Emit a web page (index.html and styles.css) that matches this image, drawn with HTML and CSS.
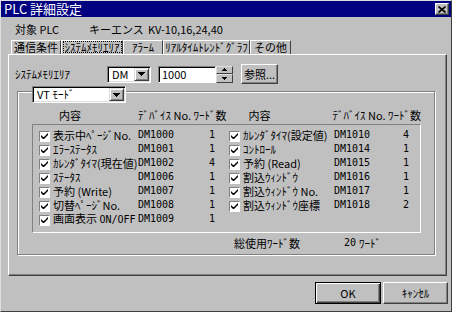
FILE: index.html
```html
<!DOCTYPE html>
<html lang="ja">
<head>
    <meta charset="UTF-8">
    <title>PLC 詳細設定</title>
    <link rel="stylesheet" href="styles.css">
</head>
<body>
<div class="window">
    <div class="titlebar">
        <span class="title">PLC 詳細設定</span>
        <span class="close"><svg width="8" height="7" viewBox="0 0 8 7"><path d="M0.5 0.5L7.5 6.5M7.5 0.5L0.5 6.5" stroke="#000" stroke-width="1.6"/></svg></span>
    </div>

    <div class="target">
        <span class="t-label">対象 PLC</span>
        <span class="t-maker">キーエンス</span>
        <span>KV-10,16,24,40</span>
    </div>

    <div class="tabs">
        <div class="tab tab-comm">通信条件</div>
        <div class="tab tab-sys"><span class="focus">ｼｽﾃﾑﾒﾓﾘｴﾘｱ</span></div>
        <div class="tab tab-alarm">ｱﾗｰﾑ</div>
        <div class="tab tab-trend">ﾘｱﾙﾀｲﾑﾄﾚﾝﾄﾞｸﾞﾗﾌ</div>
        <div class="tab tab-other">その他</div>
    </div>

    <div class="panel">
        <div class="area-row">
            <span class="area-label">ｼｽﾃﾑﾒﾓﾘｴﾘｱ</span>
            <div class="combo combo-dm">
                <span class="combo-text">DM</span>
                <span class="drop"><svg width="7" height="4" viewBox="0 0 7 4"><path d="M0 0h7v1h-1v1h-1v1h-1v1h-1v-1h-1v-1h-1v-1h-1z"/></svg></span>
            </div>
            <div class="edit"><span class="edit-text">1000</span></div>
            <div class="spin">
                <span class="spin-btn"><svg width="5" height="3" viewBox="0 0 5 3"><path d="M2 0h1v1h1v1h1v1h-5v-1h1v-1h1z"/></svg></span>
                <span class="spin-btn"><svg width="5" height="3" viewBox="0 0 5 3"><path d="M0 0h5v1h-1v1h-1v1h-1v-1h-1v-1h-1z"/></svg></span>
            </div>
            <div class="btn btn-ref">参照...</div>
        </div>

        <div class="group">
            <div class="combo combo-mode">
                <span class="combo-text">VT ﾓｰﾄﾞ</span>
                <span class="drop"><svg width="7" height="4" viewBox="0 0 7 4"><path d="M0 0h7v1h-1v1h-1v1h-1v1h-1v-1h-1v-1h-1v-1h-1z"/></svg></span>
            </div>

            <div class="list-head">
                <div class="head-half head-left"><span class="h-name">内容</span><span>ﾃﾞﾊﾞｲｽ No. ﾜｰﾄﾞ数</span></div>
                <div class="head-half head-right"><span class="h-name">内容</span><span>ﾃﾞﾊﾞｲｽ No. ﾜｰﾄﾞ数</span></div>
            </div>

            <div class="list">
                <div class="col col-left">
                    <div class="row"><span class="cb"><svg width="9" height="9" viewBox="0 0 9 9"><path d="M1 3v2l2 2h1l4-4v-2l-4 4h-1z"/></svg></span><span class="name">表示中ﾍﾟｰｼﾞNo.</span><span class="dev">DM1000</span><span class="cnt">1</span></div>
                    <div class="row"><span class="cb"><svg width="9" height="9" viewBox="0 0 9 9"><path d="M1 3v2l2 2h1l4-4v-2l-4 4h-1z"/></svg></span><span class="name">ｴﾗｰｽﾃｰﾀｽ</span><span class="dev">DM1001</span><span class="cnt">1</span></div>
                    <div class="row"><span class="cb"><svg width="9" height="9" viewBox="0 0 9 9"><path d="M1 3v2l2 2h1l4-4v-2l-4 4h-1z"/></svg></span><span class="name">ｶﾚﾝﾀﾞﾀｲﾏ(現在値)</span><span class="dev">DM1002</span><span class="cnt">4</span></div>
                    <div class="row"><span class="cb"><svg width="9" height="9" viewBox="0 0 9 9"><path d="M1 3v2l2 2h1l4-4v-2l-4 4h-1z"/></svg></span><span class="name">ｽﾃｰﾀｽ</span><span class="dev">DM1006</span><span class="cnt">1</span></div>
                    <div class="row"><span class="cb"><svg width="9" height="9" viewBox="0 0 9 9"><path d="M1 3v2l2 2h1l4-4v-2l-4 4h-1z"/></svg></span><span class="name">予約 (Write)</span><span class="dev">DM1007</span><span class="cnt">1</span></div>
                    <div class="row"><span class="cb"><svg width="9" height="9" viewBox="0 0 9 9"><path d="M1 3v2l2 2h1l4-4v-2l-4 4h-1z"/></svg></span><span class="name">切替ﾍﾟｰｼﾞNo.</span><span class="dev">DM1008</span><span class="cnt">1</span></div>
                    <div class="row"><span class="cb"><svg width="9" height="9" viewBox="0 0 9 9"><path d="M1 3v2l2 2h1l4-4v-2l-4 4h-1z"/></svg></span><span class="name">画面表示 <span class="lat">ON/OFF</span></span><span class="dev">DM1009</span><span class="cnt">1</span></div>
                </div>
                <div class="col col-right">
                    <div class="row"><span class="cb"><svg width="9" height="9" viewBox="0 0 9 9"><path d="M1 3v2l2 2h1l4-4v-2l-4 4h-1z"/></svg></span><span class="name">ｶﾚﾝﾀﾞﾀｲﾏ(設定値)</span><span class="dev">DM1010</span><span class="cnt">4</span></div>
                    <div class="row"><span class="cb"><svg width="9" height="9" viewBox="0 0 9 9"><path d="M1 3v2l2 2h1l4-4v-2l-4 4h-1z"/></svg></span><span class="name">ｺﾝﾄﾛｰﾙ</span><span class="dev">DM1014</span><span class="cnt">1</span></div>
                    <div class="row"><span class="cb"><svg width="9" height="9" viewBox="0 0 9 9"><path d="M1 3v2l2 2h1l4-4v-2l-4 4h-1z"/></svg></span><span class="name">予約 (Read)</span><span class="dev">DM1015</span><span class="cnt">1</span></div>
                    <div class="row"><span class="cb"><svg width="9" height="9" viewBox="0 0 9 9"><path d="M1 3v2l2 2h1l4-4v-2l-4 4h-1z"/></svg></span><span class="name">割込ｳｨﾝﾄﾞｳ</span><span class="dev">DM1016</span><span class="cnt">1</span></div>
                    <div class="row"><span class="cb"><svg width="9" height="9" viewBox="0 0 9 9"><path d="M1 3v2l2 2h1l4-4v-2l-4 4h-1z"/></svg></span><span class="name">割込ｳｨﾝﾄﾞｳ No.</span><span class="dev">DM1017</span><span class="cnt">1</span></div>
                    <div class="row"><span class="cb"><svg width="9" height="9" viewBox="0 0 9 9"><path d="M1 3v2l2 2h1l4-4v-2l-4 4h-1z"/></svg></span><span class="name">割込ｳｨﾝﾄﾞｳ座標</span><span class="dev">DM1018</span><span class="cnt">2</span></div>
                </div>
            </div>

            <div class="total">
                <span class="total-label">総使用ﾜｰﾄﾞ数</span>
                <span class="total-num">20</span>
                <span class="total-unit">ﾜｰﾄﾞ</span>
            </div>
        </div>
    </div>

    <div class="buttons">
        <div class="btn btn-ok">OK</div>
        <div class="btn btn-cancel">ｷｬﾝｾﾙ</div>
    </div>
</div>
</body>
</html>
```

FILE: styles.css
```css
* {
    box-sizing: border-box;
}
body {
    margin: 0;
    background: #c0c0c0;
    font-family: "Noto Sans CJK JP", sans-serif;
    font-size: 11px;
    line-height: 14px;
    color: #000;
}
.window {
    width: 452px;
    height: 312px;
    background: #c0c0c0;
    border: 1px solid;
    border-color: #dfdfdf #404040 #404040 #dfdfdf;
}

/* title bar */
.titlebar {
    height: 16px;
    background: #000080;
    color: #fff;
    display: flex;
    align-items: center;
    justify-content: space-between;
    padding: 0 2px 0 3px;
    font-size: 13px;
    line-height: 16px;
}
.close {
    width: 14px;
    height: 12px;
    background: #c0c0c0;
    border: 1px solid;
    border-color: #fff #404040 #404040 #fff;
    box-shadow: inset -1px -1px 0 #808080;
    display: flex;
    align-items: center;
    justify-content: center;
}

/* target plc */
.target {
    margin-top: 5px;
    height: 14px;
    padding-left: 14px;
    display: flex;
}
.t-label {
    width: 74px;
}
.t-maker {
    width: 59px;
}

/* tabs */
.tabs {
    margin: 4px 0 0 10px;
    height: 14px;
    display: flex;
}
.tab {
    height: 14px;
    border-top: 1px solid #fff;
    border-left: 1px solid #fff;
    border-right: 1px solid #404040;
    text-align: center;
    line-height: 12px;
    white-space: nowrap;
}
.tab-comm { width: 50px; }
.tab-sys { width: 62px; }
.tab-alarm { width: 40px; }
.tab-trend { width: 87px; }
.tab-other { width: 41px; }
.focus {
    display: inline-block;
    border: 1px dotted #000;
    padding: 0 1px;
    line-height: 10px;
}

/* tab page */
.panel {
    margin-left: 7px;
    width: 439px;
    height: 222px;
    border: 1px solid;
    border-color: #fff #404040 #404040 #fff;
    box-shadow: inset -1px -1px 0 #808080;
    padding: 9px 0 0 6px;
}
.area-row {
    height: 20px;
    display: flex;
    align-items: center;
}
.area-label {
    width: 92px;
}
.combo {
    height: 17px;
    background: #fff;
    border: 1px solid;
    border-color: #808080 #fff #fff #808080;
    box-shadow: inset 1px 1px 0 #000, inset -1px -1px 0 #dfdfdf;
    display: flex;
    align-items: center;
    justify-content: space-between;
    padding: 1px;
}
.combo-text {
    padding-left: 3px;
    line-height: 13px;
}
.combo-dm {
    width: 44px;
    margin-right: 7px;
}
.drop {
    width: 15px;
    height: 13px;
    background: #c0c0c0;
    border: 1px solid;
    border-color: #dfdfdf #404040 #404040 #dfdfdf;
    box-shadow: inset 1px 1px 0 #fff, inset -1px -1px 0 #808080;
    display: flex;
    align-items: center;
    justify-content: center;
}
.edit {
    width: 58px;
    height: 17px;
    background: #fff;
    border: 1px solid;
    border-color: #808080 #fff #fff #808080;
    box-shadow: inset 1px 1px 0 #000;
    padding-left: 3px;
    line-height: 14px;
}
.spin {
    width: 17px;
    height: 17px;
    margin-right: 8px;
    display: flex;
    flex-direction: column;
}
.spin-btn {
    height: 8px;
    flex: 1;
    border: 1px solid;
    border-color: #dfdfdf #404040 #404040 #dfdfdf;
    display: flex;
    align-items: center;
    justify-content: center;
}
.btn {
    height: 20px;
    border: 1px solid;
    border-color: #fff #404040 #404040 #fff;
    box-shadow: inset -1px -1px 0 #808080;
    display: flex;
    align-items: center;
    justify-content: center;
}
.btn-ref {
    width: 37px;
}

/* group box */
.group {
    position: relative;
    margin: 7px 0 0 2px;
    width: 418px;
    border: 1px solid #808080;
    box-shadow: 1px 1px 0 #fff, inset 1px 1px 0 #fff;
    padding: 16px 13px 4px 14px;
}
.combo-mode {
    position: absolute;
    left: 14px;
    top: -6px;
    width: 94px;
}
.list-head {
    height: 14px;
    display: flex;
}
.head-half {
    display: flex;
    white-space: nowrap;
}
.head-left {
    width: 196px;
    padding-left: 27px;
}
.head-left .h-name {
    width: 79px;
}
.head-right {
    padding-left: 21px;
}
.head-right .h-name {
    width: 84px;
}
.list {
    margin-top: 2px;
    height: 109px;
    border: 1px solid;
    border-color: #808080 #fff #fff #808080;
    padding-top: 3px;
    display: flex;
}
.col-left {
    width: 195px;
}
.col-right {
    width: 191px;
}
.row {
    height: 14px;
    display: flex;
    align-items: center;
    white-space: nowrap;
}
.col-left .row {
    padding-left: 6px;
}
.col-right .row {
    padding-left: 1px;
}
.cb {
    width: 11px;
    height: 11px;
    margin: 2px 3px 0 0;
    background: #fff;
    border: 1px solid;
    border-color: #808080 #fff #fff #808080;
    display: flex;
    align-items: center;
    justify-content: center;
    flex: none;
}
.col-left .name {
    width: 85px;
}
.col-right .name {
    width: 91px;
}
.dev, .cnt, .total-num, .lat {
    font-family: "DejaVu Sans Mono", monospace;
    font-size: 10px;
}
.dev {
    width: 60px;
}
.cnt {
    text-align: right;
}
.col-left .cnt {
    width: 17px;
}
.col-right .cnt {
    width: 15px;
}
.total {
    margin-top: 3px;
    height: 14px;
    padding-left: 202px;
    display: flex;
}
.total-label {
    width: 110px;
}
.total-num {
    width: 15px;
}

/* dialog buttons */
.buttons {
    margin-top: 6px;
    padding-right: 3px;
    display: flex;
    justify-content: flex-end;
    gap: 2px;
}
.btn-ok, .btn-cancel {
    height: 22px;
}
.btn-ok {
    width: 66px;
    border: 1px solid #000;
    box-shadow: inset 1px 1px 0 #fff, inset -1px -1px 0 #404040, inset -2px -2px 0 #808080;
}
.btn-cancel {
    width: 65px;
}
```
